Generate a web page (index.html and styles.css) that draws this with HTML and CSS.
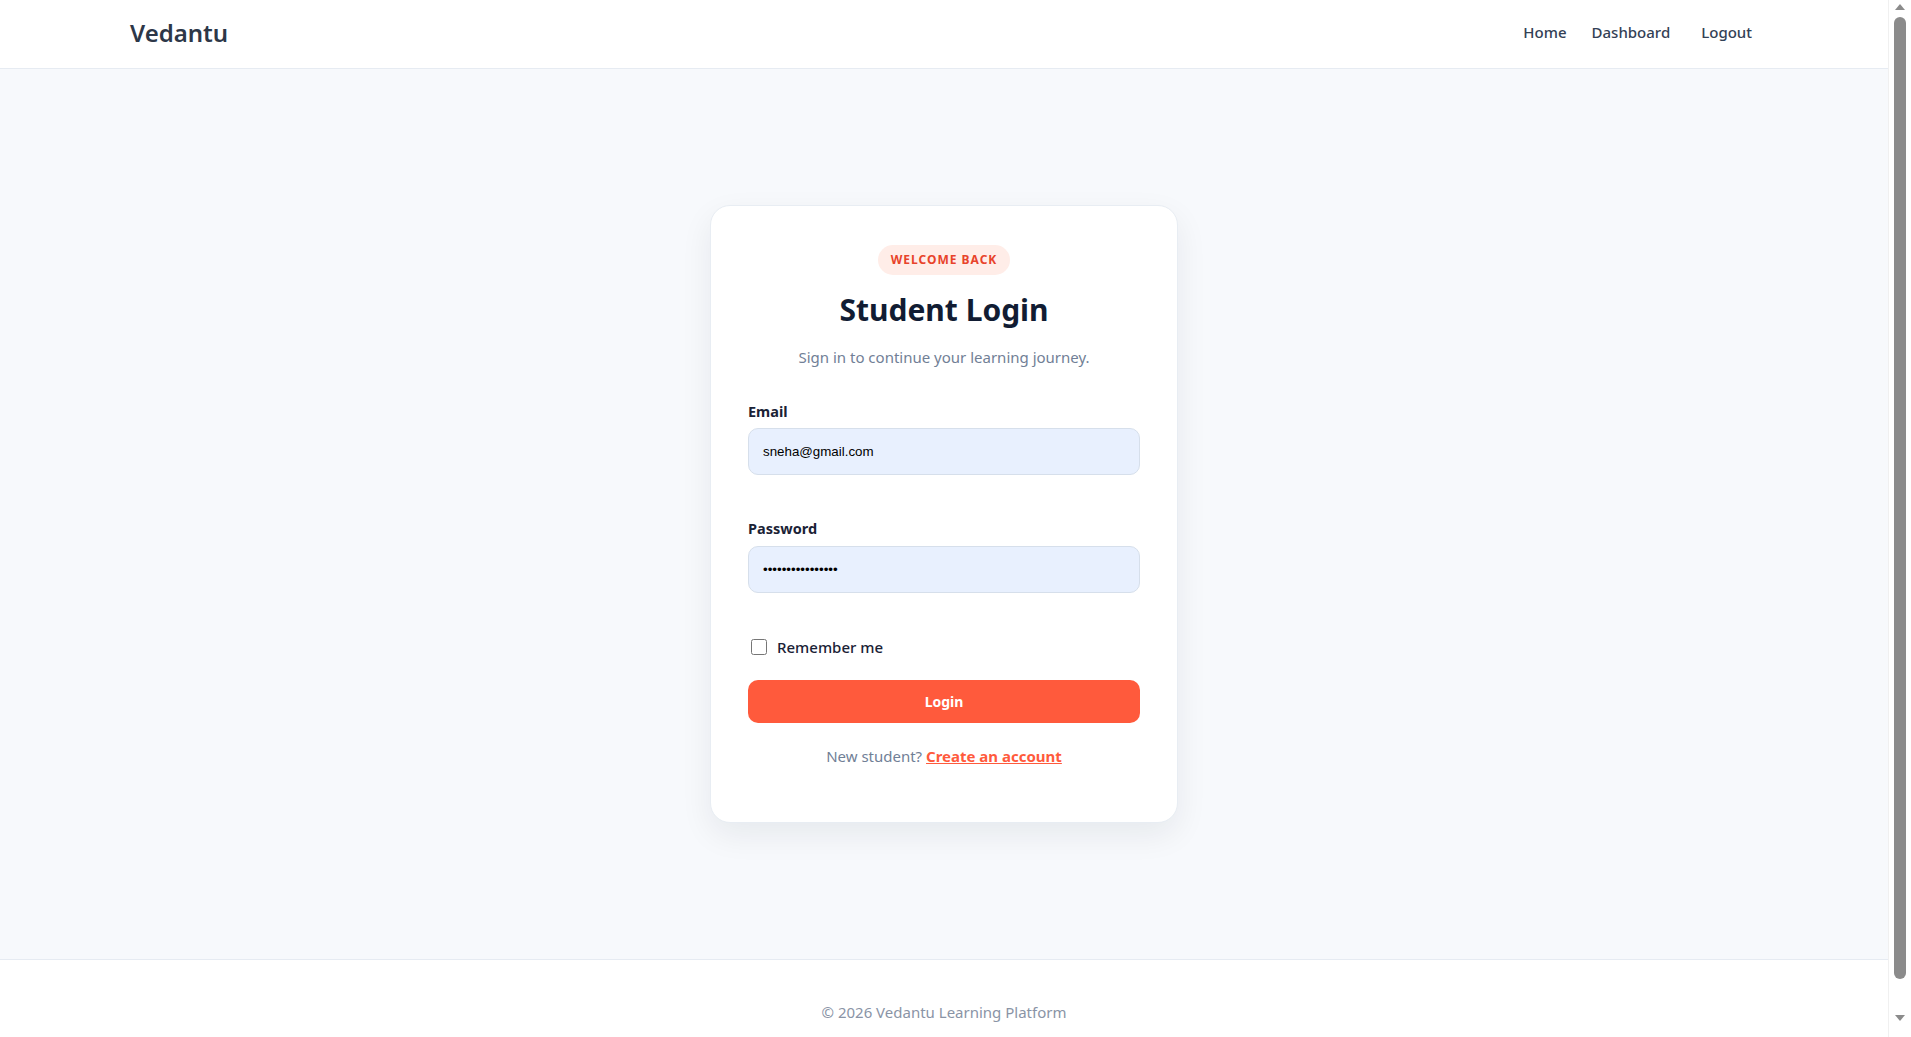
FILE: index.html
```html
<!DOCTYPE html>
<html lang="en">
<head>
<meta charset="utf-8">
<title>Vedantu - Student Login</title>
<link rel="stylesheet" href="styles.css">
</head>
<body>
<div class="page">
  <header class="topbar">
    <a class="brand" href="#">Vedantu</a>
    <nav class="nav">
      <a href="#" class="nav-link">Home</a>
      <a href="#" class="nav-link">Dashboard</a>
      <button class="nav-btn" type="button">Logout</button>
    </nav>
  </header>
  <main class="main">
    <section class="card">
      <div class="badge-wrap"><span class="badge">WELCOME BACK</span></div>
      <h1 class="title">Student Login</h1>
      <p class="subtitle">Sign in to continue your learning journey.</p>
      <form class="form">
        <label class="label" for="email">Email</label>
        <input class="input" id="email" type="email" value="sneha@gmail.com">
        <label class="label label-pw" for="pw">Password</label>
        <input class="input" id="pw" type="password" value="sneha@gmail.com1">
        <label class="remember"><input type="checkbox" class="check"><span>Remember me</span></label>
        <button class="login-btn" type="button">Login</button>
      </form>
      <p class="signup">New student? <a href="#" class="signup-link">Create an account</a></p>
    </section>
  </main>
  <footer class="footer">© 2026 Vedantu Learning Platform</footer>
</div>
<div class="scrollbar" aria-hidden="true">
  <span class="arrow arrow-up"></span>
  <span class="thumb"></span>
  <span class="arrow arrow-down"></span>
</div>
</body>
</html>
```
FILE: styles.css
```css
* { box-sizing: border-box; }
html, body { margin: 0; padding: 0; }
body {
  font-family: "Noto Sans", "Open Sans", sans-serif;
  background: #ffffff;
  color: #1e293b;
}
.page {
  margin-right: 23px;
  background: #f7f9fc;
}
.topbar {
  height: 69px;
  background: #ffffff;
  border-bottom: 1px solid #e6ebf2;
  display: flex;
  align-items: center;
  justify-content: space-between;
  padding: 0 130px;
}
.brand {
  font-size: 24px;
  font-weight: 600;
  color: #2d3748;
  text-decoration: none;
  margin-top: -4px;
}
.nav {
  display: flex;
  align-items: center;
  gap: 25px;
  margin-top: -4px;
}
.nav-link {
  font-size: 15px;
  font-weight: 500;
  color: #334155;
  text-decoration: none;
}
.nav-btn {
  font-family: inherit;
  font-size: 15px;
  font-weight: 500;
  color: #334155;
  background: none;
  border: 0;
  padding: 0 6px;
  cursor: pointer;
}
.main {
  min-height: 890px;
  display: flex;
  align-items: center;
  justify-content: center;
}
.card {
  width: 468px;
  background: #ffffff;
  border: 1px solid #e8edf3;
  border-radius: 20px;
  box-shadow: 0 12px 32px rgba(15, 23, 42, 0.07);
  padding: 39px 37px 54px;
  text-align: center;
}
.badge-wrap { display: flex; justify-content: center; }
.badge {
  display: inline-block;
  height: 30px;
  line-height: 30px;
  padding: 0 13px;
  border-radius: 15px;
  background: #ffede8;
  color: #e8432a;
  font-size: 12px;
  font-weight: 700;
  letter-spacing: 1px;
}
.title {
  margin: 15px 0 0;
  font-size: 30px;
  line-height: 40px;
  font-weight: 700;
  color: #111c33;
}
.subtitle {
  margin: 15px 0 0;
  font-size: 15px;
  line-height: 24px;
  color: #718096;
}
.form {
  display: flex;
  flex-direction: column;
  text-align: left;
  margin-top: 31px;
}
.label {
  font-size: 14.5px;
  line-height: 22px;
  font-weight: 700;
  color: #1a2236;
  margin-bottom: 6px;
}
.label-pw { margin-top: 42px; margin-bottom: 7px; }
.input {
  height: 47px;
  width: 100%;
  border: 1px solid #d6dfeb;
  border-radius: 10px;
  background: #e8f0fe;
  padding: 0 14px;
  font-family: "Liberation Sans", Arial, sans-serif;
  font-size: 13.33px;
  color: #000000;
  outline: none;
}
.remember {
  display: flex;
  align-items: center;
  margin-top: 42px;
  font-size: 15px;
  line-height: 24px;
  font-weight: 500;
  color: #1a2236;
}
.check {
  width: 16px;
  height: 16px;
  margin: 0 10px 0 3px;
}
.login-btn {
  margin-top: 21px;
  height: 43px;
  width: 100%;
  border: 0;
  border-radius: 10px;
  background: #ff5a3c;
  color: #ffffff;
  font-family: inherit;
  font-size: 14px;
  font-weight: 700;
  cursor: pointer;
}
.signup {
  margin: 21px 0 0;
  font-size: 15px;
  line-height: 24px;
  color: #718096;
}
.signup-link {
  color: #ff5a3c;
  font-weight: 700;
  text-decoration: underline;
}
.footer {
  background: #ffffff;
  border-top: 1px solid #e6ebf2;
  padding: 40px 0 40px;
  text-align: center;
  font-size: 15px;
  line-height: 24px;
  color: #8a94a6;
}
.scrollbar {
  position: fixed;
  top: 0;
  right: 0;
  width: 23px;
  height: 100vh;
  background: #ffffff;
  border-left: 1px solid #f0f0f0;
}
.thumb {
  position: absolute;
  left: 5px;
  width: 12px;
  top: 17px;
  bottom: 58px;
  border-radius: 6px;
  background: #8b8b8b;
}
.arrow {
  position: absolute;
  left: 6px;
  width: 0;
  height: 0;
  border-left: 5px solid transparent;
  border-right: 5px solid transparent;
}
.arrow-up {
  top: 4px;
  border-bottom: 6px solid #8b8b8b;
}
.arrow-down {
  bottom: 16px;
  border-top: 6px solid #8b8b8b;
}
```
